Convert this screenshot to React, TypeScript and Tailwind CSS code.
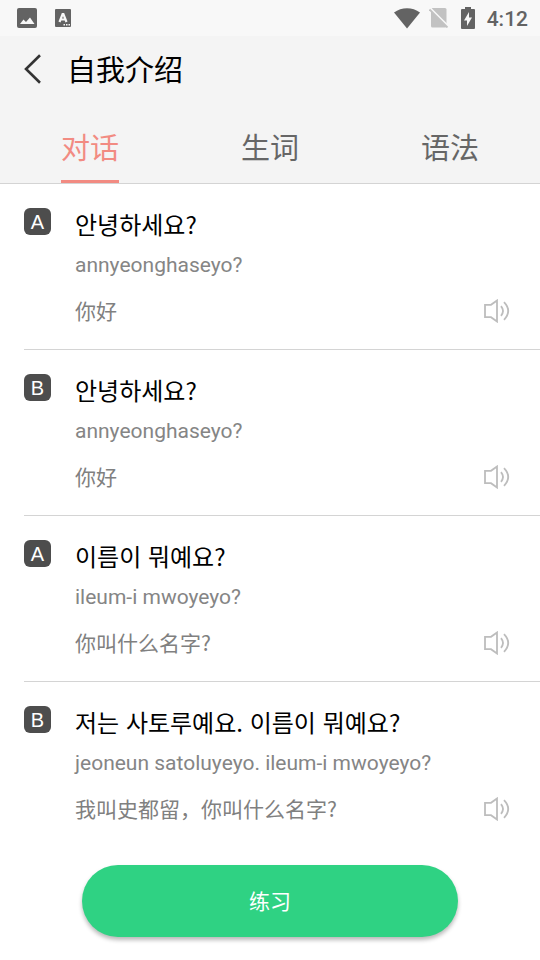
import { useState } from "react";

const tabs = ["对话", "生词", "语法"];

const dialogue = [
  {
    speaker: "A",
    korean: "안녕하세요?",
    roman: "annyeonghaseyo?",
    chinese: "你好",
  },
  {
    speaker: "B",
    korean: "안녕하세요?",
    roman: "annyeonghaseyo?",
    chinese: "你好",
  },
  {
    speaker: "A",
    korean: "이름이 뭐예요?",
    roman: "ileum-i mwoyeyo?",
    chinese: "你叫什么名字?",
  },
  {
    speaker: "B",
    korean: "저는 사토루예요. 이름이 뭐예요?",
    roman: "jeoneun satoluyeyo. ileum-i mwoyeyo?",
    chinese: "我叫史都留，你叫什么名字?",
  },
];

function StatusBar() {
  return (
    <div className="flex h-9 items-center justify-between bg-[#f8f8f8] pr-3 pl-[17px] text-[#636363]">
      <div className="flex items-center gap-[18px]">
        <svg viewBox="0 0 20 20" className="h-5 w-5" aria-hidden="true">
          <rect width="20" height="20" rx="2" fill="currentColor" />
          <path d="M3 16l3.500-4.500 2.500 2.500 4-4.500 4.500 6.500z" fill="#f8f8f8" />
        </svg>
        <svg viewBox="0 0 16 18" className="h-[18px] w-4" aria-hidden="true">
          <rect width="16" height="18" rx="1" fill="currentColor" />
          <path
            d="M4.500 13L7.600 5h.8l3.100 8M5.800 10.500h4.400"
            fill="none"
            stroke="#f8f8f8"
            strokeWidth="2.200"
          />
          <path d="M8.500 15h1.500v1.500H8.500zM11 15h1.500v1.500H11zM13.500 15H15v1.500h-1.500z" fill="#f8f8f8" />
        </svg>
      </div>
      <div className="flex items-center">
        <svg viewBox="0 0 26 21" className="h-[21px] w-[26px]" aria-hidden="true">
          <path d="M0 4.500C7.500-1.200 18.500-1.200 26 4.500L13 20.500z" fill="currentColor" />
        </svg>
        <svg viewBox="0 0 20 20" className="ml-[9px] h-5 w-5" aria-hidden="true">
          <rect x="2" width="15.500" height="19.500" rx="1.500" fill="#c2c2c2" />
          <path d="M1 0l19 19" stroke="#f8f8f8" strokeWidth="2" />
          <path d="M.5 1.500l18 18" stroke="#c2c2c2" strokeWidth="1.800" />
        </svg>
        <svg viewBox="0 0 14 22" className="ml-3 h-[22px] w-3.5" aria-hidden="true">
          <path
            d="M4 0h6v2h3a1 1 0 0 1 1 1v18a1 1 0 0 1-1 1H1a1 1 0 0 1-1-1V3a1 1 0 0 1 1-1h3z"
            fill="currentColor"
          />
          <path d="M8 5L3 13.500h3V19l5-8.500H8z" fill="#f8f8f8" />
        </svg>
        <span className="ml-3 pt-px font-['Roboto',sans-serif] text-[21px] leading-6 font-medium">
          4:12
        </span>
      </div>
    </div>
  );
}

function SpeakerIcon() {
  return (
    <svg
      viewBox="0 0 26 24"
      className="h-6 w-[26px]"
      fill="none"
      stroke="#bdbdbd"
      strokeWidth="1.800"
      aria-hidden="true"
    >
      <path d="M1 5.800h6l6-4.300v21L7 18.200H1z" />
      <path d="M17 7.200q4 4.800 0 9.600" />
      <path d="M20 3.200q8.400 8.800 0 17.600" />
    </svg>
  );
}

export default function App() {
  const [active, setActive] = useState(0);

  return (
    <div
      lang="zh-CN"
      className="min-h-screen bg-white font-['Roboto','Noto_Sans_CJK_SC',sans-serif]"
    >
      <header className="border-b border-[#d4d4d4] bg-[#f4f4f4]">
        <StatusBar />
        <div className="flex h-[66px] items-center gap-6 pl-6">
          <button type="button" aria-label="返回">
            <svg
              viewBox="0 0 19 30"
              className="h-[30px] w-[19px]"
              fill="none"
              stroke="#333"
              strokeWidth="2.600"
              aria-hidden="true"
            >
              <path d="M16 1.200L2 15l14 13.800" />
            </svg>
          </button>
          <h1 className="pt-1 text-[29px] leading-10 text-black">自我介绍</h1>
        </div>
        <div role="tablist" className="grid grid-cols-3 pt-2">
          {tabs.map((tab, i) => (
            <div key={tab} className="flex justify-center">
              <button
                type="button"
                role="tab"
                aria-selected={active === i}
                onClick={() => setActive(i)}
                className={
                  active === i
                    ? "h-[73px] border-b-[3px] border-[#f28b82] pt-2 text-[29px] leading-10 text-[#f28b82]"
                    : "h-[73px] border-b-[3px] border-transparent pt-2 text-[29px] leading-10 text-[#666]"
                }
              >
                {tab}
              </button>
            </div>
          ))}
        </div>
      </header>

      <main>
        <ul className="divide-y divide-[#d4d4d4] pl-6">
          {dialogue.map((line, i) => (
            <li key={i} className="flex items-start gap-6 pt-6 pr-[30px] pb-[26px]">
              <span className="flex h-[27px] w-[27px] shrink-0 items-center justify-center rounded-md bg-[#4d4d4d] font-['Liberation_Sans',sans-serif] text-xl text-white">
                {line.speaker}
              </span>
              <div className="min-w-0 flex-1">
                <p
                  lang="ko"
                  className="font-['Noto_Sans_CJK_KR',sans-serif] text-2xl leading-8 text-black"
                >
                  {line.korean}
                </p>
                <p className="mt-[13px] text-[21px] leading-6 text-[#858585]">{line.roman}</p>
                <div className="mt-[22px] flex items-start justify-between">
                  <p className="font-['Noto_Sans_CJK_SC',sans-serif] text-[21px] leading-[22px] text-[#808080]">
                    {line.chinese}
                  </p>
                  <button type="button" aria-label="播放">
                    <SpeakerIcon />
                  </button>
                </div>
              </div>
            </li>
          ))}
        </ul>
        <div className="flex px-[82px] pt-[18px] pb-[23px]">
          <button
            type="button"
            className="h-[72px] flex-1 rounded-full bg-[#2fd283] pt-1 text-[21px] text-white shadow-[0_3px_4px_rgba(0,0,0,0.28)]"
          >
            练习
          </button>
        </div>
      </main>
    </div>
  );
}
